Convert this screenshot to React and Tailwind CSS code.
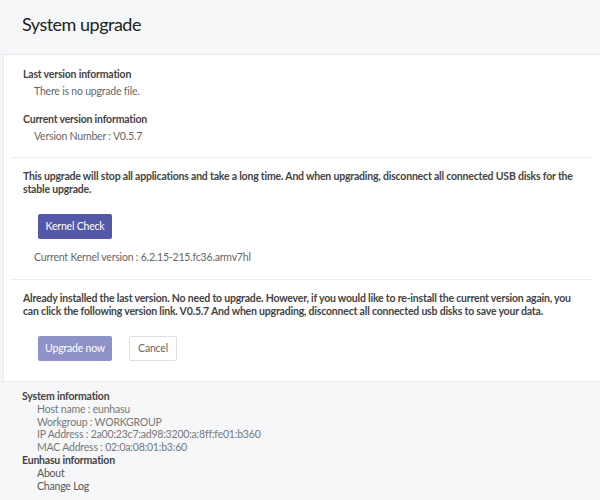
import React from 'react';

export default function App() {
  const font = { fontFamily: 'Lato, "Open Sans", sans-serif' };
  return (
    <div className="w-[600px] h-[500px] bg-[#f6f7f9] text-[10.5px] tracking-[-0.2px] text-[#444] overflow-hidden" style={font}>
      <div className="h-[55px] border-b border-[#e6e8eb] pl-[22px] pt-[12px]">
        <h1 className="text-[18px] tracking-[-0.5px] text-[#222] leading-[24px]">System upgrade</h1>
      </div>
      <div className="ml-[3px] bg-white border-l border-[#e9ecef] pb-[20px]">
        <div className="mx-[7px] border-b border-[#eceef0] pl-[12px] pt-[12px] pb-[14px]">
          <div className="font-bold leading-[14px]">Last version information</div>
          <div className="pl-[11px] mt-[3px] text-[#666] leading-[14px]">There is no upgrade file.</div>
          <div className="font-bold mt-[14px] leading-[14px]">Current version information</div>
          <div className="pl-[11px] mt-[3px] text-[#666] leading-[14px]">Version Number : V0.5.7</div>
        </div>
        <div className="mx-[7px] border-b border-[#eceef0] pl-[12px] pr-[8px] pt-[12px] pb-[15px]">
          <p className="font-bold leading-[13px]">
            This upgrade will stop all applications and take a long time. And when upgrading, disconnect all connected USB disks for the stable upgrade.
          </p>
          <button className="ml-[15px] mt-[18px] w-[74px] h-[25px] bg-[#5558a8] text-white rounded-[2px] text-[10.5px]">
            Kernel Check
          </button>
          <div className="pl-[11px] mt-[11px] text-[#666] leading-[14px]">Current Kernel version : 6.2.15-215.fc36.armv7hl</div>
        </div>
        <div className="mx-[7px] pl-[12px] pr-[8px] pt-[12px]">
          <p className="font-bold leading-[13px]">
            Already installed the last version. No need to upgrade. However, if you would like to re-install the current version again, you can click the following version link. V0.5.7 And when upgrading, disconnect all connected usb disks to save your data.
          </p>
          <div className="flex gap-[17px] ml-[15px] mt-[18px]">
            <button className="w-[74px] h-[25px] bg-[#8f91c9] text-white rounded-[2px] text-[10.5px]">Upgrade now</button>
            <button className="w-[48px] h-[25px] bg-white border border-[#dcdfe3] text-[#666] rounded-[2px] text-[10.5px]">Cancel</button>
          </div>
        </div>
      </div>
      <div className="border-t border-[#e9ecef] pl-[22px] pt-[8px] leading-[12.8px]">
        <div className="font-bold">System information</div>
        <div className="pl-[15px] text-[#777]">
          <div>Host name : eunhasu</div>
          <div>Workgroup : WORKGROUP</div>
          <div>IP Address : 2a00:23c7:ad98:3200:a:8ff:fe01:b360</div>
          <div>MAC Address : 02:0a:08:01:b3:60</div>
        </div>
        <div className="font-bold">Eunhasu information</div>
        <div className="pl-[15px] text-[#555]">
          <div>About</div>
          <div>Change Log</div>
        </div>
      </div>
    </div>
  );
}
